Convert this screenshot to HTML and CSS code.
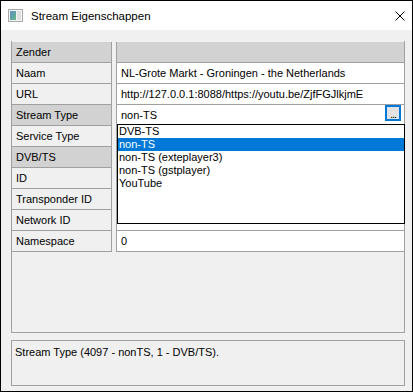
FILE: index.html
```html
<!doctype html>
<html lang="nl">
<head>
    <meta charset="UTF-8">
    <meta name="viewport" content="width=device-width, initial-scale=1">
    <title>Stream Eigenschappen</title>
    <link rel="stylesheet" href="styles.css">
</head>
<body>
<div class="window">
    <div class="titlebar">
        <svg class="app-icon" width="15" height="13" viewBox="0 0 15 13">
            <defs>
                <linearGradient id="pane" x1="0" y1="0" x2="1" y2="1">
                    <stop offset="0" stop-color="#6a8fc8"/>
                    <stop offset="0.5" stop-color="#5ea3a8"/>
                    <stop offset="1" stop-color="#6cb884"/>
                </linearGradient>
            </defs>
            <rect x="0.5" y="0.5" width="14" height="12" fill="#f4f4f4" stroke="#a8a8a8"/>
            <rect x="2" y="2" width="6" height="9" fill="url(#pane)"/>
            <rect x="9" y="2" width="4" height="9" fill="#e0e0e0"/>
        </svg>
        <span class="title">Stream Eigenschappen</span>
        <svg class="close" width="10" height="10" viewBox="0 0 10 10">
            <path d="M0.5 0.5 L9.5 9.5 M9.5 0.5 L0.5 9.5" stroke="#000" stroke-width="1"/>
        </svg>
    </div>

    <div class="client">
        <div class="grid">
            <div class="row category">
                <div class="name">Zender</div>
                <div class="gutter"></div>
                <div class="value"></div>
            </div>
            <div class="row">
                <div class="name">Naam</div>
                <div class="gutter"></div>
                <div class="value">NL-Grote Markt - Groningen - the Netherlands</div>
            </div>
            <div class="row">
                <div class="name">URL</div>
                <div class="gutter"></div>
                <div class="value">http://127.0.0.1:8088/https://youtu.be/ZjfFGJlkjmE</div>
            </div>
            <div class="row selected">
                <div class="name">Stream Type</div>
                <div class="gutter"></div>
                <div class="value">
                    <span class="value-text">non-TS</span>
                    <span class="ellipsis-btn">...</span>
                </div>
            </div>
            <div class="row">
                <div class="name">Service Type</div>
                <div class="gutter"></div>
                <div class="value"></div>
            </div>
            <div class="row category">
                <div class="name">DVB/TS</div>
                <div class="gutter"></div>
                <div class="value"></div>
            </div>
            <div class="row">
                <div class="name">ID</div>
                <div class="gutter"></div>
                <div class="value"></div>
            </div>
            <div class="row">
                <div class="name">Transponder ID</div>
                <div class="gutter"></div>
                <div class="value"></div>
            </div>
            <div class="row">
                <div class="name">Network ID</div>
                <div class="gutter"></div>
                <div class="value"></div>
            </div>
            <div class="row">
                <div class="name">Namespace</div>
                <div class="gutter"></div>
                <div class="value">0</div>
            </div>

            <ul class="dropdown">
                <li>DVB-TS</li>
                <li class="active">non-TS</li>
                <li>non-TS (exteplayer3)</li>
                <li>non-TS (gstplayer)</li>
                <li>YouTube</li>
            </ul>
        </div>

        <div class="desc">Stream Type (4097 - nonTS, 1 - DVB/TS).</div>
    </div>
</div>
</body>
</html>
```

FILE: styles.css
```css
body {
    margin: 0;
    padding: 0;
    font-family: "Liberation Sans", Arial, sans-serif;
    font-size: 11px;
    color: #000;
    background: #fff;
}

.window {
    width: 413px;
    height: 392px;
    border: 1px solid #000;
    box-sizing: border-box;
    display: flex;
    flex-direction: column;
    overflow: hidden;
}

.titlebar {
    height: 29px;
    background: #fff;
    display: flex;
    align-items: center;
    padding: 0 7px;
    flex-shrink: 0;
}

.app-icon {
    margin-right: 8px;
}

.title {
    font-size: 11.5px;
    color: #000;
}

.close {
    margin-left: auto;
}

.client {
    flex: 1;
    background: #f0f0f0;
    padding: 11px 7px 5px 10px;
    display: flex;
    flex-direction: column;
}

.grid {
    position: relative;
    flex: 1;
    padding-top: 1px;
    border: 1px solid #a0a0a0;
    border-top: none;
}

.row {
    display: flex;
    height: 21px;
}

.name,
.value {
    height: 21px;
    box-sizing: border-box;
    border-bottom: 1px solid #a0a0a0;
    line-height: 20px;
    padding-left: 4px;
    white-space: nowrap;
    overflow: hidden;
}

.name {
    width: 99px;
    background: #f0f0f0;
}

.gutter {
    width: 6px;
    box-sizing: border-box;
    border-left: 1px solid #a0a0a0;
    border-right: 1px solid #a0a0a0;
}

.value {
    flex: 1;
    background: #fff;
    display: flex;
}

.value-text {
    flex: 1;
}

.category .name,
.category .value,
.selected .name {
    background: #d2d2d2;
}

.ellipsis-btn {
    width: 16px;
    height: 16px;
    margin-right: 3px;
    box-sizing: border-box;
    border: 2px solid #0078d7;
    background: #e3e3e3;
    font-size: 11px;
    line-height: 14px;
    text-align: center;
    letter-spacing: -1px;
}

.dropdown {
    position: absolute;
    left: 105px;
    top: 83px;
    width: 288px;
    height: 100px;
    margin: 0;
    padding: 0;
    list-style: none;
    box-sizing: border-box;
    border: 1px solid #000;
    background: #fff;
}

.dropdown li {
    height: 13px;
    line-height: 13px;
    padding-left: 1px;
}

.dropdown li.active {
    background: #0078d7;
    color: #fff;
}

.desc {
    height: 46px;
    margin-top: 7px;
    box-sizing: border-box;
    border: 1px solid #a0a0a0;
    padding: 4px 3px;
    line-height: 14px;
}
```
